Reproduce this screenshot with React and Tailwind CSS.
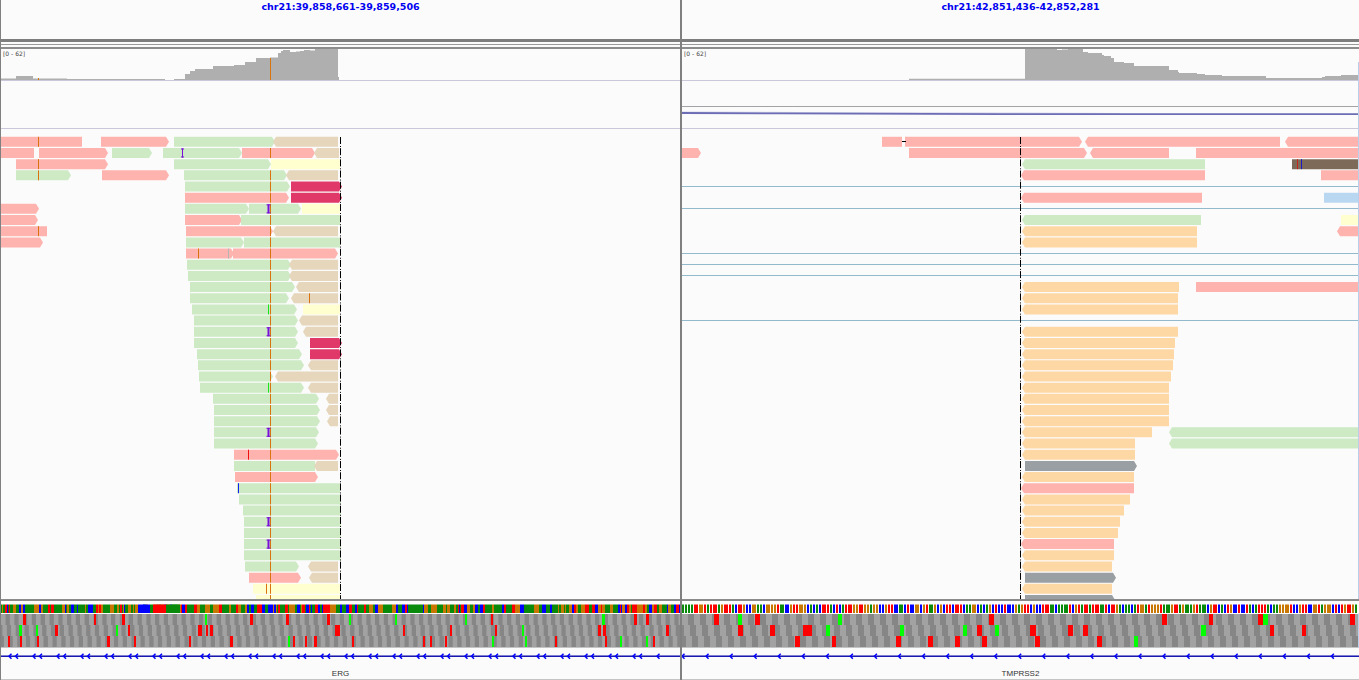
import React from 'react';

const C = {
  p: '#feb3ae', // pink
  g: '#cdeac5', // green
  t: '#e5d6bc', // tan
  y: '#ffffcf', // yellow
  c: '#df3869', // crimson
  o: '#fed8a4', // orange
  s: '#9a9fa3', // slate
  b: '#7e6a58', // brown
  l: '#bad7f2', // light blue
};

const rowY = (i) => 136.8 + i * 11.175;

// [row, x1, x2, colour, direction]
const leftReads = [
  [0, 1, 82, 'p'], [0, 101, 169, 'p', 'r'], [0, 174, 275, 'g', 'r'], [0, 273, 338, 't', 'l'],
  [1, 1, 34, 'p'], [1, 39, 108, 'p', 'r'], [1, 112, 152, 'g', 'r'], [1, 163, 242, 'g', 'r'], [1, 242, 315, 'p', 'r'], [1, 314, 339, 't', 'l'],
  [2, 16, 108, 'p', 'r'], [2, 174, 271, 'g', 'r'], [2, 271, 340, 'y'],
  [3, 16, 71, 'g', 'r'], [3, 102, 169, 'p', 'r'], [3, 184, 287, 'g', 'r'], [3, 286, 338, 't', 'l'],
  [4, 185, 290, 'g', 'r'], [4, 291, 342, 'c', 'r'],
  [5, 185, 289, 'p', 'r'], [5, 291, 342, 'c', 'r'],
  [6, 1, 39, 'p', 'r'], [6, 185, 249, 'g', 'r'], [6, 249, 301, 'g', 'r'], [6, 302, 340, 'y'],
  [7, 1, 38, 'p', 'r'], [7, 185, 242, 'p', 'r'], [7, 241, 340, 'g'],
  [8, 1, 47, 'p'], [8, 186, 273, 'p', 'r'], [8, 273, 338, 't', 'l'],
  [9, 1, 43, 'p', 'r'], [9, 186, 244, 'g', 'r'], [9, 244, 340, 'g'],
  [10, 186, 234, 'p', 'r'], [10, 233, 338, 'p', 'r'],
  [11, 187, 291, 'g', 'r'], [11, 289, 338, 't', 'l'],
  [12, 188, 291, 'g', 'r'], [12, 289, 338, 't', 'l'],
  [13, 190, 295, 'g', 'r'], [13, 296, 338, 't', 'l'],
  [14, 190, 289, 'g', 'r'], [14, 291, 338, 't', 'l'],
  [15, 192, 297, 'g', 'r'], [15, 303, 340, 'y'],
  [16, 194, 298, 'g', 'r'], [16, 299, 338, 't', 'l'],
  [17, 194, 298, 'g', 'r'], [17, 303, 338, 't', 'l'],
  [18, 194, 298, 'g', 'r'], [18, 310, 342, 'c', 'r'],
  [19, 197, 302, 'g', 'r'], [19, 310, 342, 'c', 'r'],
  [20, 198, 304, 'g', 'r'], [20, 308, 338, 't', 'l'],
  [21, 199, 273, 'g', 'r'], [21, 275, 338, 't', 'l'],
  [22, 200, 304, 'g', 'r'], [22, 308, 338, 't', 'l'],
  [23, 213, 319, 'g', 'r'], [23, 326, 338, 't', 'l'],
  [24, 214, 320, 'g', 'r'], [24, 326, 338, 't', 'l'],
  [25, 214, 320, 'g', 'r'], [25, 327, 338, 't', 'l'],
  [26, 214, 319, 'g', 'r'],
  [27, 214, 318, 'g', 'r'],
  [28, 234, 339, 'p', 'r'],
  [29, 234, 315, 'g'], [29, 314, 338, 't', 'l'],
  [30, 235, 318, 'p', 'r'],
  [31, 237, 340, 'g'],
  [32, 239, 341, 'g'],
  [33, 243, 341, 'g'],
  [34, 244, 341, 'g'],
  [35, 244, 341, 'g'],
  [36, 244, 341, 'g'],
  [37, 244, 341, 'g'],
  [38, 245, 299, 'g', 'r'], [38, 308, 338, 't', 'l'],
  [39, 249, 301, 'p', 'r'], [39, 309, 338, 't', 'l'],
  [40, 253, 340, 'y'],
  [41, 256, 340, 'y'],
];

const rightReads = [
  [0, 882, 902, 'p'], [0, 905, 1082, 'p', 'r'], [0, 1085, 1280, 'p', 'l'], [0, 1285, 1358, 'p', 'l'],
  [1, 682, 701, 'p', 'r'], [1, 909, 1087, 'p', 'r'], [1, 1090, 1169, 'p', 'l'], [1, 1196, 1358, 'p'],
  [2, 1022, 1205, 'g', 'l'], [2, 1292, 1358, 'b'],
  [3, 1021, 1205, 'p', 'l'], [3, 1321, 1358, 'p'],
  [5, 1021, 1202, 'p', 'l'], [5, 1324, 1358, 'l'],
  [7, 1022, 1201, 'g', 'l'], [7, 1341, 1358, 'y'],
  [8, 1022, 1197, 'o', 'l'], [8, 1337, 1358, 'p', 'l'],
  [9, 1022, 1197, 'o', 'l'],
  [13, 1022, 1179, 'o', 'l'], [13, 1196, 1358, 'p'],
  [14, 1022, 1178, 'o', 'l'],
  [15, 1022, 1178, 'o', 'l'],
  [17, 1022, 1178, 'o', 'l'],
  [18, 1022, 1175, 'o', 'l'],
  [19, 1022, 1174, 'o', 'l'],
  [20, 1022, 1173, 'o', 'l'],
  [21, 1022, 1171, 'o', 'l'],
  [22, 1022, 1169, 'o', 'l'],
  [23, 1022, 1169, 'o', 'l'],
  [24, 1022, 1169, 'o', 'l'],
  [25, 1022, 1169, 'o', 'l'],
  [26, 1022, 1152, 'o', 'l'], [26, 1169, 1358, 'g', 'l'],
  [27, 1022, 1135, 'o', 'l'], [27, 1169, 1358, 'g', 'l'],
  [28, 1022, 1135, 'o', 'l'],
  [29, 1025, 1137, 's', 'r'],
  [30, 1022, 1134, 'o', 'l'],
  [31, 1021, 1134, 'p', 'l'],
  [32, 1022, 1130, 'o', 'l'],
  [33, 1022, 1124, 'o', 'l'],
  [34, 1022, 1120, 'o', 'l'],
  [35, 1022, 1118, 'o', 'l'],
  [36, 1021, 1114, 'p', 'l'],
  [37, 1022, 1114, 'o', 'l'],
  [38, 1022, 1112, 'o', 'l'],
  [39, 1025, 1116, 's', 'r'],
  [40, 1022, 1112, 'o', 'l'],
  [41, 1025, 1115, 's', 'r'],
];

// [row, x, colour] mismatch ticks
const orangeRows = [1, ...Array.from({ length: 39 }, (_, i) => i + 3)];
const leftTicks = [
  ...orangeRows.map((r) => [r, 270, '#d9730d']),
  [0, 38, '#d9730d'], [2, 38, '#d9730d'], [3, 38, '#d9730d'], [8, 38, '#d9730d'],
  [10, 198, '#d9730d'], [10, 228, '#b5b5b5'], [14, 309, '#d9730d'],
  [15, 268, '#19e619'], [22, 268, '#19e619'],
  [28, 248, '#f01010'], [31, 238, '#1020f0'], [40, 266, '#d9730d'],
];
const rightTicks = [[2, 1297, '#c8261a'], [2, 1301, '#1a1ac8']];
const leftInserts = [[1, 182, 1], [6, 268, 2], [17, 268, 2], [26, 268, 2], [34, 268, 2], [36, 268, 2]];

const leftCov = [[1, 78.5], [16, 76], [33, 78.5], [67, 79], [165, 80], [174, 79], [185, 74], [190, 71], [195, 69], [213, 66], [234, 65], [245, 62], [256, 58], [270, 57.5], [278, 53], [281, 51], [283, 50], [290, 52], [296, 51.5], [300, 51], [304, 50], [310, 50.5], [315, 49], [338, 77], [339, 80]];
const rightCov = [[909, 78.8], [1025, 49], [1057, 50], [1062, 49.5], [1068, 49], [1083, 52], [1088, 53], [1102, 55], [1104, 56], [1111, 58], [1114, 62], [1124, 63], [1134, 66], [1169, 70], [1178, 72], [1179, 73], [1197, 74], [1205, 75], [1222, 76], [1266, 78], [1322, 77], [1325, 76], [1341, 75], [1358, 80]];

// [row, x, width, colour] stop and start codons
const R = '#ff0000';
const G = '#00ff00';
const leftCodons = [
  [0, 23, 3, R], [0, 94, 2, R], [0, 122, 3, R], [0, 205, 2, G], [0, 250, 3, R], [0, 286, 3, R], [0, 327, 3, R], [0, 349, 2, G], [0, 395, 2, G], [0, 465, 2, G], [0, 491, 2, R], [0, 602, 3, G], [0, 634, 3, R], [0, 646, 3, R],
  [1, 19, 3, G], [1, 36, 2, G], [1, 55, 3, R], [1, 116, 2, G], [1, 128, 2, R], [1, 198, 4, R], [1, 206, 2, R], [1, 210, 3, R], [1, 335, 5, R], [1, 403, 2, R], [1, 450, 2, R], [1, 495, 2, R], [1, 522, 2, G], [1, 598, 3, R], [1, 603, 3, R], [1, 666, 3, R],
  [2, 8, 2, R], [2, 20, 2, R], [2, 37, 2, R], [2, 107, 3, R], [2, 134, 2, R], [2, 189, 2, R], [2, 230, 3, R], [2, 288, 2, G], [2, 293, 2, R], [2, 305, 2, R], [2, 314, 3, R], [2, 352, 2, R], [2, 423, 2, R], [2, 430, 2, R], [2, 445, 2, R], [2, 492, 2, G], [2, 525, 2, G], [2, 555, 2, R], [2, 605, 2, R], [2, 620, 2, G], [2, 646, 2, G], [2, 653, 2, R],
];
const rightCodons = [
  [0, 714, 5, R], [0, 738, 4, G], [0, 755, 5, R], [0, 838, 4, G], [0, 989, 5, R], [0, 1162, 5, R], [0, 1209, 4, R], [0, 1258, 5, R], [0, 1263, 5, G], [0, 1350, 5, R],
  [1, 738, 5, R], [1, 770, 5, R], [1, 803, 9, R], [1, 826, 4, G], [1, 900, 4, G], [1, 963, 4, G], [1, 977, 5, R], [1, 995, 4, G], [1, 1030, 6, R], [1, 1068, 5, R], [1, 1083, 5, R], [1, 1201, 5, G], [1, 1270, 4, R], [1, 1302, 4, R],
  [2, 795, 5, R], [2, 832, 4, R], [2, 896, 5, R], [2, 928, 5, R], [2, 955, 5, R], [2, 982, 5, R], [2, 1035, 5, R], [2, 1097, 5, R], [2, 1134, 4, G],
];

const seeded = (seed) => {
  let s = seed;
  return () => {
    s = (s * 1664525 + 1013904223) % 4294967296;
    return s / 4294967296;
  };
};

const BASES = ['#0a8a0a', '#c87800', '#0000ff', '#ff0000'];

const pickBase = (v) => {
  if (v < 0.42) return BASES[0];
  if (v < 0.68) return BASES[1];
  if (v < 0.86) return BASES[2];
  return BASES[3];
};

const leftBases = () => {
  const rand = seeded(21);
  const out = [];
  let x = 1;
  while (x < 680) {
    const w = 1 + Math.floor(rand() * 3);
    out.push([x, w, pickBase(rand())]);
    x += w;
  }
  // the long runs in the middle of the band
  out.push([153, 13, BASES[3]], [166, 14, BASES[0]], [143, 5, BASES[2]]);
  return out;
};

const rightBases = () => {
  const rand = seeded(42);
  const out = [];
  let x = 682;
  while (x < 1358) {
    const w = rand() > 0.8 ? 4 : 2;
    out.push([x, w, BASES[Math.floor(rand() * 4)]]);
    x += w + 1;
  }
  return out;
};

const readPoints = (x1, x2, y, dir) => {
  const h = 10;
  if (dir === 'r') return `${x1},${y} ${x2 - 3},${y} ${x2},${y + h / 2} ${x2 - 3},${y + h} ${x1},${y + h}`;
  if (dir === 'l') return `${x1 + 3},${y} ${x2},${y} ${x2},${y + h} ${x1 + 3},${y + h} ${x1},${y + h / 2}`;
  return `${x1},${y} ${x2},${y} ${x2},${y + h} ${x1},${y + h}`;
};

const covPoints = (steps) => {
  const pts = [`${steps[0][0]},80`];
  steps.forEach(([x, top], i) => {
    const next = steps[i + 1] ? steps[i + 1][0] : x;
    pts.push(`${x},${top}`, `${next},${top}`);
  });
  pts.push(`${steps[steps.length - 1][0]},80`);
  return pts.join(' ');
};

const Rule = () => (
  <div className="flex flex-col h-[10px]">
    <div className="h-[2.5px] bg-[#7d7d7d]" />
    <div className="h-[2.5px]" />
    <div className="h-px bg-[#9a9a9a]" />
    <div className="h-[2px]" />
    <div className="h-[2px] bg-[#8c8c8c]" />
  </div>
);

const Panel = ({ x0, width, locus, gene, reads, ticks, inserts, cov, covMarks, hLines, flat, clip, codons, bases, stripe, arrows, className }) => {
  const rowsTop = 129;
  const edge = '#b8d0e8';
  return (
    <div className={`flex flex-col ${className}`}>
      <div className="h-[39px] flex justify-center pt-[1px]">
        <span className="text-[9.5px] leading-[12px] font-bold text-[#0000f0] [font-family:'DejaVu_Sans',sans-serif]">{locus}</span>
      </div>
      <Rule />

      {/* coverage */}
      <svg width={width} height={32} viewBox={`${x0} 49 ${width} 32`} className="block">
        <polygon points={covPoints(cov)} fill="#afafaf" />
        {covMarks.map(([x, y]) => (
          <rect key={x} x={x} y={y} width={1} height={80 - y} fill="#d9730d" />
        ))}
        <rect x={x0} y={80} width={width} height={1} fill="#c9c7da" />
        <text x={x0 + 2} y={56} fontSize="6" fill="#444" fontFamily="DejaVu Sans, sans-serif">[0 - 62]</text>
        {flat && <rect x={1358} y={62} width={1} height={19} fill={edge} />}
      </svg>

      {/* empty track */}
      <svg width={width} height={48} viewBox={`${x0} 81 ${width} 48`} className="block">
        {flat && (
          <>
            <rect x={x0} y={106} width={width} height={1} fill="#a3a3a3" />
            <polygon points="682,111.5 800,112 1000,112.5 1120,113 1120,114 682,113" fill="#d4d4ea" />
            <polygon points="682,112 780,112.6 1000,113.2 1358,113.2 1358,115 1000,115 780,114.3 682,114" fill="#6c6db5" />
          </>
        )}
        <rect x={x0} y={128} width={width} height={1} fill="#c9c7da" />
        {flat && <rect x={1358} y={81} width={1} height={48} fill={edge} />}
      </svg>

      {/* alignments */}
      <svg width={width} height={470} viewBox={`${x0} ${rowsTop} ${width} 470`} className="block">
        {hLines.map((y) => (
          <rect key={y} x={x0} y={y} width={width} height={1} fill="#93b9cd" />
        ))}
        {reads.map(([row, x1, x2, c, dir], i) => (
          <polygon key={i} points={readPoints(x1, x2, rowY(row), dir)} fill={C[c]} />
        ))}
        {ticks.map(([row, x, c], i) => (
          <rect key={i} x={x} y={rowY(row)} width={1} height={10} fill={c} />
        ))}
        {inserts.map(([row, x, w], i) => (
          <g key={i} fill="#7a10d8">
            <rect x={x - w / 2 + 0.5} y={rowY(row) + 0.5} width={w} height={9} />
            <rect x={x - w / 2 - 0.5} y={rowY(row) + 0.5} width={w + 2} height={1} />
            <rect x={x - w / 2 - 0.5} y={rowY(row) + 8.5} width={w + 2} height={1} />
          </g>
        ))}
        <line x1={clip} x2={clip} y1={137} y2={599} stroke="#000" strokeWidth="1" strokeDasharray="7 2 1 1.175" />
        {flat && <rect x={902} y={141} width={4} height={1} fill="#000" />}
        {flat && <rect x={1358} y={129} width={1} height={470} fill={edge} />}
      </svg>

      {/* divider above the sequence */}
      <div className="h-[2px] bg-[#8a8a8a]" />
      <div className="h-[2.5px]" />

      {/* sequence and translation */}
      <svg width={width} height={44.5} viewBox={`${x0} 603.5 ${width} 44.5`} className="block">
        {bases.map(([x, w, c], i) => (
          <rect key={i} x={x} y={604} width={w} height={8.5} fill={c} />
        ))}
        {[0, 1, 2].map((row) => (
          <g key={row}>
            {Array.from({ length: Math.ceil(width / stripe) + 2 }, (_, k) => (
              <rect
                key={k}
                x={x0 - stripe + (row * stripe) / 3 + k * stripe}
                y={613.5 + row * 11}
                width={stripe + 0.5}
                height={11}
                fill={k % 2 ? '#a2a2a2' : '#868686'}
              />
            ))}
          </g>
        ))}
        {codons.map(([row, x, w, c], i) => (
          <rect key={i} x={x} y={613.5 + row * 11} width={w} height={11} fill={c} />
        ))}
        <rect x={x0} y={646.5} width={width} height={1.5} fill="#c4c4c4" />
        {flat && <rect x={1358} y={613} width={1} height={35} fill={edge} />}
      </svg>

      {/* gene */}
      <svg width={width} height={16} viewBox={`${x0} 649 ${width} 16`} className="block">
        <rect x={x0} y={656.5} width={width} height={1.4} fill="#0000a8" />
        {arrows.map((x, i) => (
          <path key={i} d={`M${x + 1.5} 654.7 L${x - 1} 657.2 L${x + 1.5} 659.7`} fill="none" stroke="#0000ff" strokeWidth="1.5" />
        ))}
      </svg>

      <div className="flex-1 flex justify-center items-end">
        <span className="text-[8px] leading-[10px] text-[#333] [font-family:'Liberation_Sans',sans-serif]">{gene}</span>
      </div>
      <div className="h-px bg-[#c4c4c4]" />
    </div>
  );
};

export default function App() {
  const leftArrows = [];
  for (let k = 0; k < 28; k++) {
    leftArrows.push(10 + k * 24);
    if (k < 27) leftArrows.push(16.5 + k * 24);
  }
  const rightArrows = [];
  for (let k = 0; k < 28; k++) rightArrows.push(683 + k * 24.05);

  return (
    <div className="w-[1359px] h-[680px] flex overflow-hidden bg-[#fbfbfb]">
      <Panel
        className="w-[680px] border-l border-[#808080]"
        x0={1}
        width={679}
        locus="chr21:39,858,661-39,859,506"
        gene="ERG"
        reads={leftReads}
        ticks={leftTicks}
        inserts={leftInserts}
        cov={leftCov}
        covMarks={[[38, 78], [270, 58]]}
        hLines={[]}
        clip={340.5}
        codons={leftCodons}
        bases={leftBases()}
        stripe={4.4}
        arrows={leftArrows}
      />
      <Panel
        className="w-[679px] border-l-2 border-[#808080]"
        x0={682}
        width={677}
        locus="chr21:42,851,436-42,852,281"
        gene="TMPRSS2"
        reads={rightReads}
        ticks={rightTicks}
        inserts={[]}
        cov={rightCov}
        covMarks={[]}
        hLines={[186, 208, 253, 264, 275, 320]}
        flat
        clip={1020.5}
        codons={rightCodons}
        bases={rightBases()}
        stripe={6}
        arrows={rightArrows}
      />
    </div>
  );
}
